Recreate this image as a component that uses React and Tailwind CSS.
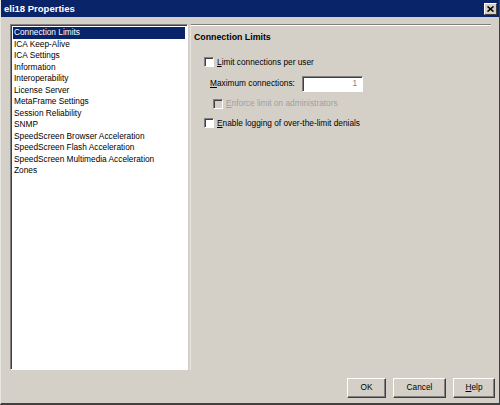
import React from "react";

const items = [
  "Connection Limits",
  "ICA Keep-Alive",
  "ICA Settings",
  "Information",
  "Interoperability",
  "License Server",
  "MetaFrame Settings",
  "Session Reliability",
  "SNMP",
  "SpeedScreen Browser Acceleration",
  "SpeedScreen Flash Acceleration",
  "SpeedScreen Multimedia Acceleration",
  "Zones",
];

function Check({ disabled }) {
  return (
    <span
      className={
        "inline-block w-[10px] h-[10px] border border-t-[#808080] border-l-[#808080] border-b-white border-r-white shadow-[inset_1px_1px_0_#404040] " +
        (disabled ? "bg-[#d4d0c8]" : "bg-white")
      }
    />
  );
}

function Btn({ children, w }) {
  return (
    <button
      className={`${w} h-[20px] bg-[#d4d0c8] border border-t-white border-l-white border-b-[#404040] border-r-[#404040] shadow-[inset_-1px_-1px_0_#808080] text-black`}
    >
      {children}
    </button>
  );
}

export default function App() {
  return (
    <div
      className="w-[500px] h-[405px] bg-[#d4d0c8] flex flex-col border-l border-l-[#e8e6e0] border-b-2 border-b-[#404040] border-r border-r-[#404040] text-[8.3px] leading-[11.5px] text-black overflow-hidden"
      style={{ fontFamily: '"Liberation Sans", Arial, sans-serif' }}
    >
      {/* title bar */}
      <div className="h-[17px] bg-[#0a246a] flex items-center justify-between pl-[3px] pr-[2px]">
        <span className="text-white font-bold text-[9.5px]">eli18 Properties</span>
        <span className="w-[13px] h-[12px] bg-[#d4d0c8] border border-t-white border-l-white border-b-[#404040] border-r-[#404040] flex items-center justify-center">
          <svg width="7" height="6" viewBox="0 0 7 6">
            <path d="M0.5 0.5 L6.5 5.5 M6.5 0.5 L0.5 5.5" stroke="#000" strokeWidth="1.6" />
          </svg>
        </span>
      </div>

      {/* body */}
      <div className="flex pl-[9px] pt-[7px] pr-[8px]">
        <div className="w-[178px] h-[346px] border border-t-[#808080] border-l-[#808080] border-b-white border-r-white shadow-[inset_1px_1px_0_#404040] bg-white p-[2px]">
          {items.map((it, i) => (
            <div
              key={it}
              className={
                "pl-[1px] h-[11.5px] " +
                (i === 0 ? "bg-[#0a246a] text-white" : "")
              }
            >
              {it}
            </div>
          ))}
        </div>

        <div className="ml-[2px] flex-1 h-[346px] border-t border-l border-t-[#808080] border-l-[#e8e6e0] shadow-[inset_0_1px_0_white] pl-[3px] pt-[7px]">
          <div className="font-bold text-[8.8px]">Connection Limits</div>

          <div className="mt-[13px] ml-[10px] flex items-center gap-[3px]">
            <Check />
            <span>
              <span className="underline">L</span>imit connections per user
            </span>
          </div>

          <div className="mt-[8px] ml-[16px] flex items-center">
            <span className="w-[92px]">
              <span className="underline">M</span>aximum connections:
            </span>
            <div className="w-[61px] h-[16px] bg-white border border-t-[#808080] border-l-[#808080] border-b-white border-r-white shadow-[inset_1px_1px_0_#404040] flex items-center justify-end pr-[5px] text-[#808080]">
              1
            </div>
          </div>

          <div className="mt-[6px] ml-[19px] flex items-center gap-[3px] text-[#a0a0a0]">
            <Check disabled />
            <span>
              <span className="underline">E</span>nforce limit on administrators
            </span>
          </div>

          <div className="mt-[8px] ml-[10px] flex items-center gap-[3px]">
            <Check />
            <span>
              <span className="underline">E</span>nable logging of over-the-limit denials
            </span>
          </div>
        </div>
      </div>

      {/* buttons */}
      <div className="flex justify-end gap-[7px] pr-[4px] mt-[8px]">
        <Btn w="w-[39px]">OK</Btn>
        <Btn w="w-[53px]">Cancel</Btn>
        <Btn w="w-[42px]">
          <span className="underline">H</span>elp
        </Btn>
      </div>
    </div>
  );
}
